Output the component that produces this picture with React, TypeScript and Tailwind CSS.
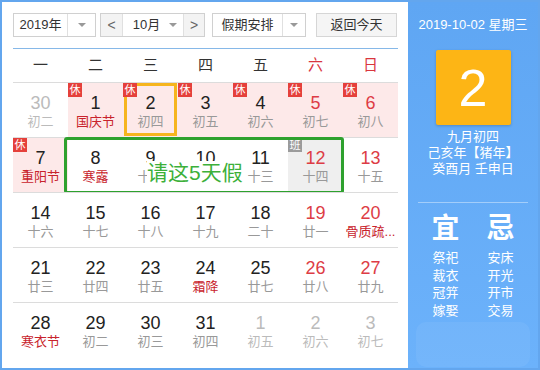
import React from 'react';

type Day = {
  d: string;
  l: string;
  out?: boolean; // not in this month
  fest?: boolean; // festival / solar term, red text
  wk?: boolean; // weekend, red number
  rest?: boolean; // 休
  work?: boolean; // 班
  sel?: boolean;
};

const weeks: Day[][] = [
  [
    { d: '30', l: '初二', out: true },
    { d: '1', l: '国庆节', fest: true, rest: true },
    { d: '2', l: '初四', rest: true, sel: true },
    { d: '3', l: '初五', rest: true },
    { d: '4', l: '初六', rest: true },
    { d: '5', l: '初七', rest: true, wk: true },
    { d: '6', l: '初八', rest: true, wk: true },
  ],
  [
    { d: '7', l: '重阳节', fest: true, rest: true },
    { d: '8', l: '寒露', fest: true },
    { d: '9', l: '十一' },
    { d: '10', l: '十二' },
    { d: '11', l: '十三' },
    { d: '12', l: '十四', wk: true, work: true },
    { d: '13', l: '十五', wk: true },
  ],
  [
    { d: '14', l: '十六' },
    { d: '15', l: '十七' },
    { d: '16', l: '十八' },
    { d: '17', l: '十九' },
    { d: '18', l: '二十' },
    { d: '19', l: '廿一', wk: true },
    { d: '20', l: '骨质疏...', wk: true, fest: true },
  ],
  [
    { d: '21', l: '廿三' },
    { d: '22', l: '廿四' },
    { d: '23', l: '廿五' },
    { d: '24', l: '霜降', fest: true },
    { d: '25', l: '廿七' },
    { d: '26', l: '廿八', wk: true },
    { d: '27', l: '廿九', wk: true },
  ],
  [
    { d: '28', l: '寒衣节', fest: true },
    { d: '29', l: '初二' },
    { d: '30', l: '初三' },
    { d: '31', l: '初四' },
    { d: '1', l: '初五', out: true },
    { d: '2', l: '初六', out: true },
    { d: '3', l: '初七', out: true },
  ],
];

const weekdays = ['一', '二', '三', '四', '五', '六', '日'];

const Caret = () => (
  <span className="w-0 h-0 border-x-[4px] border-t-[4px] border-x-transparent border-t-[#999]" />
);

const DayCell: React.FC<{ day: Day }> = ({ day }) => {
  const bg = day.rest ? 'bg-[#fde9e9]' : day.work ? 'bg-[#efefef]' : 'bg-white';
  const numColor = day.out ? 'text-[#bbb]' : day.wk ? 'text-[#dd3c45]' : 'text-[#222]';
  const lunarColor = day.out ? 'text-[#bbb]' : day.fest ? 'text-[#c8232c]' : 'text-[#999]';
  return (
    <div className={`relative h-[54px] flex flex-col items-center pt-[10px] ${bg}`}>
      <div className={`text-[18px] leading-[20px] ${numColor}`}>{day.d}</div>
      <div className={`text-[13px] leading-[18px] ${lunarColor}`}>{day.l}</div>
      {day.sel && (
        <div className="absolute left-[1px] right-[1px] top-0 bottom-[1px] border-[3px] border-[#f6b51e]" />
      )}
      {day.rest && (
        <span className="absolute left-0 top-0 w-[14px] h-[14px] bg-[#e5403b] text-white text-[11px] leading-[14px] text-center">
          休
        </span>
      )}
      {day.work && (
        <span className="absolute left-0 top-0 w-[14px] h-[14px] bg-[#9b9b9b] text-white text-[11px] leading-[14px] text-center">
          班
        </span>
      )}
    </div>
  );
};

export default function App() {
  return (
    <div
      className="w-[540px] h-[370px] flex bg-white border-2 border-[#63a6ee] overflow-hidden"
      style={{ fontFamily: '"Liberation Sans", "Noto Sans CJK SC", sans-serif' }}
    >
      {/* Left: calendar */}
      <div className="w-[406px] shrink-0 pl-[11px] pr-[10px] pt-[11px]">
        {/* Toolbar */}
        <div className="flex h-[24px] text-[13px] text-[#333]">
          <div className="flex w-[83px] border border-[#d0d0d0]">
            <div className="w-[54px] flex items-center justify-center border-r border-[#e0e0e0]">2019年</div>
            <div className="flex-1 flex items-center justify-center">
              <Caret />
            </div>
          </div>
          <div className="flex w-[105px] ml-[4px] border border-[#d0d0d0]">
            <div className="w-[22px] flex items-center justify-center bg-[#f3f3f3] border-r border-[#e0e0e0] text-[#666] text-[14px]">
              &lt;
            </div>
            <div className="w-[60px] flex items-center justify-center gap-[9px] pl-[4px]">
              <span>10月</span>
              <Caret />
            </div>
            <div className="flex-1 flex items-center justify-center bg-[#f3f3f3] border-l border-[#e0e0e0] text-[#666] text-[14px]">
              &gt;
            </div>
          </div>
          <div className="flex w-[94px] ml-[7px] border border-[#d0d0d0]">
            <div className="w-[70px] flex items-center justify-center border-r border-[#e0e0e0]">假期安排</div>
            <div className="flex-1 flex items-center justify-center">
              <Caret />
            </div>
          </div>
          <div className="w-[81px] ml-[10px] flex items-center justify-center border border-[#d6d6d6] bg-[#f5f5f5]">
            返回今天
          </div>
        </div>

        <div className="mt-[11px] h-px bg-[#86b8e8]" />

        {/* Weekday header */}
        <div className="grid grid-cols-7 h-[33px] items-center text-[15px]">
          {weekdays.map((w, i) => (
            <div key={w} className={`text-center ${i >= 5 ? 'text-[#d9363e]' : 'text-[#333]'}`}>
              {w}
            </div>
          ))}
        </div>

        {/* Weeks */}
        {weeks.map((week, wi) => (
          <div key={wi} className="relative grid grid-cols-7 border-t border-[#dcdcdc]">
            {week.map((day, di) => (
              <DayCell key={di} day={day} />
            ))}
            {wi === 1 && (
              <>
                <div className="absolute left-[51px] top-[-1px] w-[280px] h-[57px] border-[3px] border-[#2ea12e] rounded-[3px]" />
                <div className="absolute left-[134px] top-[23px] bg-white text-[#3cb03a] text-[21px] leading-[23px]">
                  请这5天假
                </div>
              </>
            )}
          </div>
        ))}
      </div>

      {/* Right: day detail */}
      <div className="flex-1 flex flex-col items-center bg-linear-to-b from-[#5fa6f3] to-[#6cb2fb] text-white">
        <div className="mt-[14px] text-[13px] leading-[18px]">2019-10-02 星期三</div>
        <div className="mt-[16px] w-[75px] h-[75px] bg-[#fdb515] rounded-[2px] shadow-[0_1px_3px_rgba(0,0,0,0.2)] flex items-center justify-center text-[52px] leading-none">
          2
        </div>
        <div className="mt-[4px] text-[13px] leading-[16px] text-center">
          <div>九月初四</div>
          <div>己亥年【猪年】</div>
          <div>癸酉月 壬申日</div>
        </div>
        <div className="mt-[25px] w-[110px] h-px bg-white/40" />
        <div className="mt-[10px] grid grid-cols-2 w-[110px] text-center">
          <div className="text-[28px] leading-[32px] font-bold">宜</div>
          <div className="text-[28px] leading-[32px] font-bold">忌</div>
          <div className="mt-[4px] text-[13px] leading-[17.5px]">
            <div>祭祀</div>
            <div>裁衣</div>
            <div>冠笄</div>
            <div>嫁娶</div>
          </div>
          <div className="mt-[4px] text-[13px] leading-[17.5px]">
            <div>安床</div>
            <div>开光</div>
            <div>开市</div>
            <div>交易</div>
          </div>
        </div>
        <div className="mt-[3px] w-[114px] h-[45px] rounded-[10px] bg-white/[0.06]" />
      </div>
    </div>
  );
}
